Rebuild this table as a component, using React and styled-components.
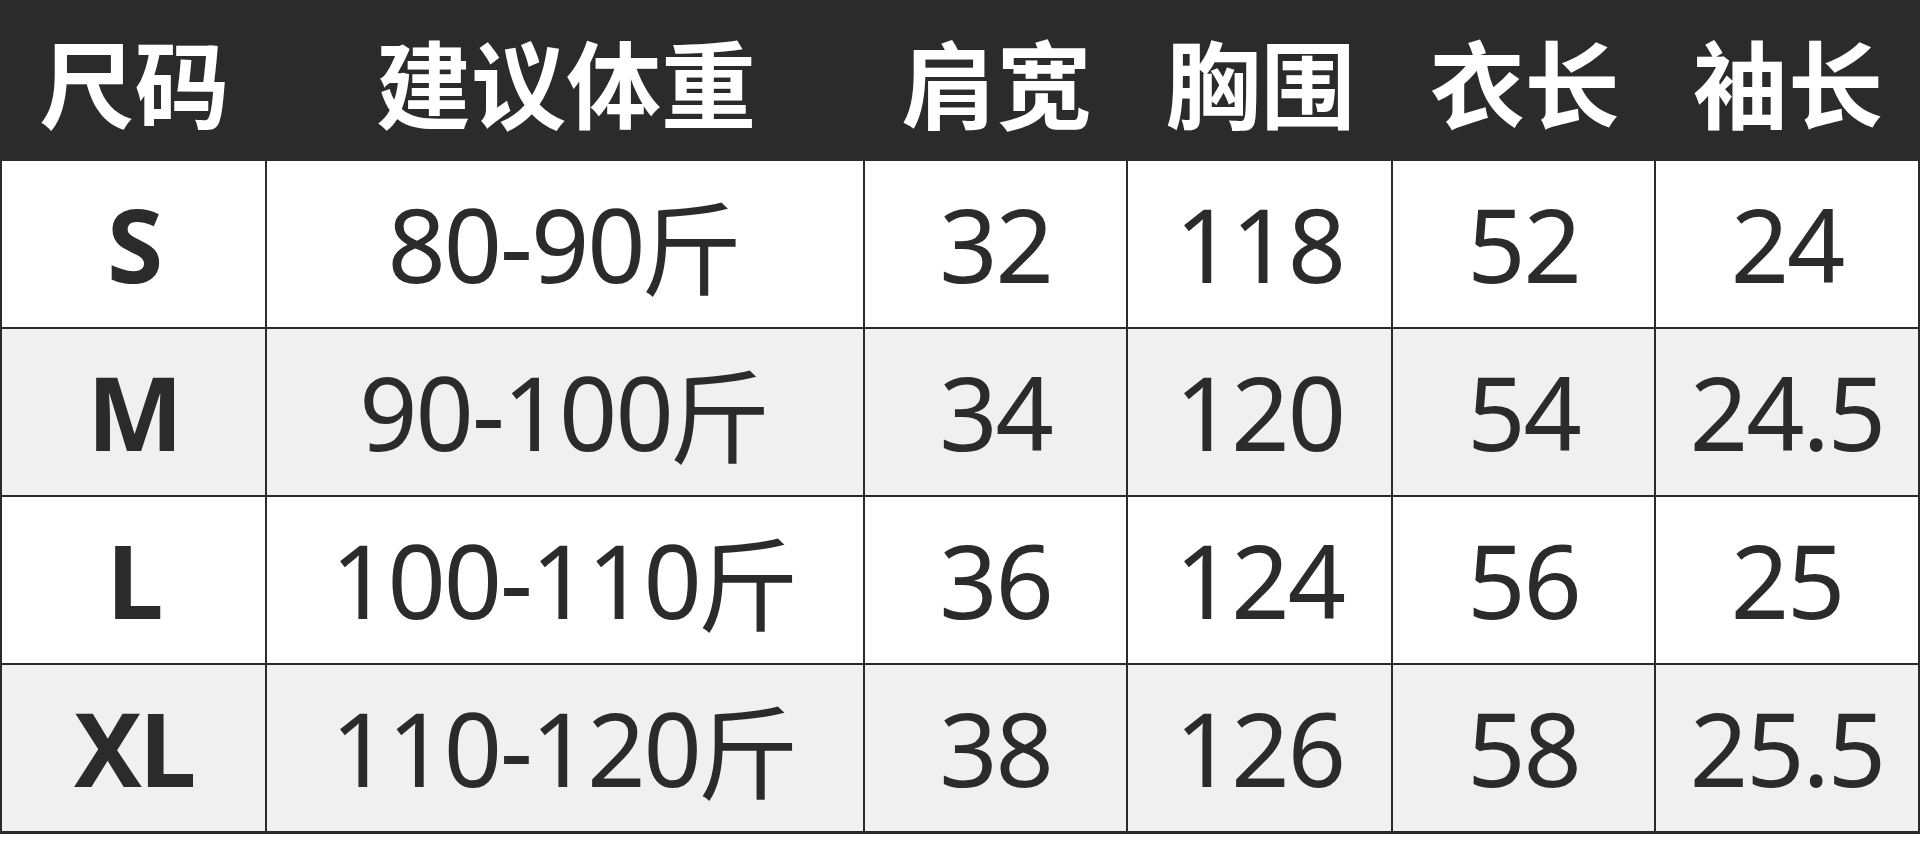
import React from 'react';
import styled, { createGlobalStyle, css } from 'styled-components';

const GlobalStyle = createGlobalStyle`
  html, body {
    margin: 0;
    padding: 0;
    background: #ffffff;
  }
  body {
    font-family: "Noto Sans", "Noto Sans CJK SC", sans-serif;
    color: #2b2b2b;
  }
`;

const COLUMNS = '265px 598px 263px 265px 263px 1fr';

const Page = styled.div`
  width: 1920px;
  height: 868px;
  overflow: hidden;
  background: #ffffff;
`;

const Grid = styled.div`
  display: grid;
  grid-template-columns: ${COLUMNS};
  box-sizing: border-box;
  border-left: 2px solid #2b2b2b;
`;

const Header = styled(Grid)`
  height: 161px;
  background: #2b2b2b;
`;

const HeadCell = styled.div`
  display: flex;
  align-items: center;
  justify-content: center;
  box-sizing: border-box;
  color: #ffffff;
  font-family: "Noto Sans CJK SC", sans-serif;
  font-weight: 700;
  font-size: 95px;
  line-height: 1;
  white-space: nowrap;
`;

const Row = styled(Grid)`
  height: ${(p) => (p.last ? 169 : 168)}px;
  background: ${(p) => (p.shade ? '#f0f0f0' : '#ffffff')};
  border-bottom: ${(p) => (p.last ? 3 : 2)}px solid #2b2b2b;
`;

const Cell = styled.div`
  display: flex;
  align-items: center;
  justify-content: center;
  box-sizing: border-box;
  border-right: 2px solid #2b2b2b;
  font-family: "Noto Sans", "Noto Sans CJK SC", sans-serif;
  font-size: 102px;
  line-height: 1;
  white-space: nowrap;
  letter-spacing: -2px;
  ${(p) =>
    p.size &&
    css`
      font-weight: 700;
      letter-spacing: -3px;
    `}
`;

const Jin = styled.span`
  font-family: "Noto Sans CJK SC", sans-serif;
  font-weight: 400;
  letter-spacing: 0;
  margin-left: -3px;
`;

const heads = ['尺码', '建议体重', '肩宽', '胸围', '衣长', '袖长'];

const rows = [
  { size: 'S', weight: '80-90', shoulder: '32', chest: '118', length: '52', sleeve: '24' },
  { size: 'M', weight: '90-100', shoulder: '34', chest: '120', length: '54', sleeve: '24.5' },
  { size: 'L', weight: '100-110', shoulder: '36', chest: '124', length: '56', sleeve: '25' },
  { size: 'XL', weight: '110-120', shoulder: '38', chest: '126', length: '58', sleeve: '25.5' }
];

const App = () => (
  <Page>
    <GlobalStyle />
    <Header>
      {heads.map((h) => (
        <HeadCell key={h}>{h}</HeadCell>
      ))}
    </Header>
    {rows.map((r, idx) => (
      <Row key={r.size} shade={idx % 2 === 1} last={idx === rows.length - 1}>
        <Cell size>{r.size}</Cell>
        <Cell>
          {r.weight}
          <Jin>斤</Jin>
        </Cell>
        <Cell>{r.shoulder}</Cell>
        <Cell>{r.chest}</Cell>
        <Cell>{r.length}</Cell>
        <Cell>{r.sleeve}</Cell>
      </Row>
    ))}
  </Page>
);

export default App;
